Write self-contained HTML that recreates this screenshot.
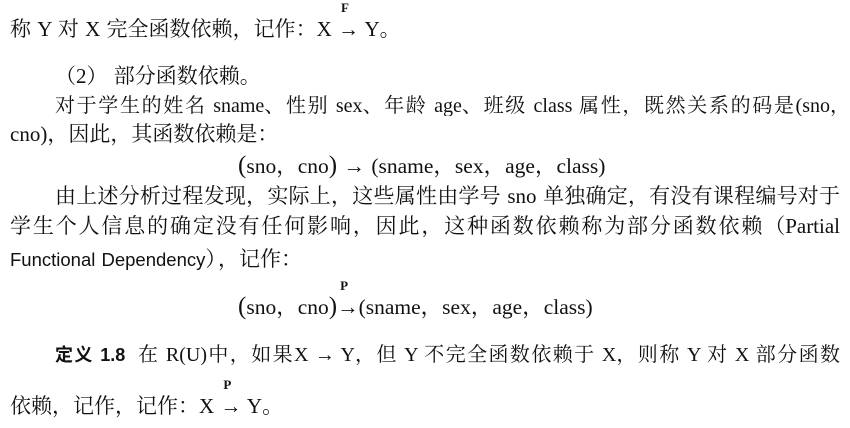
<!DOCTYPE html>
<html><head><meta charset="utf-8"><style>
body{margin:0;width:850px;height:428px;background:#fff;position:relative;overflow:hidden;font-family:"Liberation Serif","Noto Serif CJK SC","Noto Sans CJK SC",serif;font-size:21px;color:#111;word-spacing:1px}
.l{position:absolute;white-space:nowrap;line-height:24px;height:24px}
.j{text-align:justify;text-align-last:justify;white-space:normal;overflow:hidden}
.a{position:relative;display:inline-block}
.a sup{position:absolute;left:3px;top:-16px;font-size:13px;line-height:13px;font-weight:bold}
.s{font-family:"Liberation Sans","Noto Sans CJK SC",sans-serif}
.p{display:inline-block;width:1em;text-align:left;font-family:"Noto Serif CJK SC","Noto Sans CJK SC",serif}
.pr{text-align:right}
.big{font-size:25px}
</style></head><body>
<div class="l" style="left:10px;top:16px">称 Y 对 X 完全函数依赖<span class="p">，</span>记作<span class="p">：</span>X <span class="a">→<sup>F</sup></span> Y<span class="p">。</span></div>
<div class="l" style="left:55px;top:63px"><span class="p pr">（</span>2<span class="p">）</span> 部分函数依赖<span class="p">。</span></div>
<div class="l j" style="left:55px;top:92px;width:785px;font-size:20px;word-spacing:0">对于学生的姓名 sname<span class="p">、</span>性别 sex<span class="p">、</span>年龄 age<span class="p">、</span>班级 class 属性<span class="p">，</span>既然关系的码是(sno<span class="p" style="width:0.5em">，</span></div>
<div class="l" style="left:10px;top:121px">cno)<span class="p">，</span>因此<span class="p">，</span>其函数依赖是<span class="p">：</span></div>
<div class="l" style="left:238px;top:153px;font-size:21.5px"><span class="big">(</span>sno<span class="p">，</span>cno<span class="big">)</span> → (sname<span class="p">，</span>sex<span class="p">，</span>age<span class="p">，</span>class)</div>
<div class="l j" style="left:55px;top:183px;width:785px">由上述分析过程发现<span class="p">，</span>实际上<span class="p">，</span>这些属性由学号 sno 单独确定<span class="p">，</span>有没有课程编号对于</div>
<div class="l j" style="left:10px;top:213px;width:830px">学生个人信息的确定没有任何影响<span class="p">，</span>因此<span class="p">，</span>这种函数依赖称为部分函数依赖<span class="p pr">（</span>Partial</div>
<div class="l" style="left:10px;top:246px"><span class="s" style="font-size:18.5px">Functional Dependency</span><span class="p" style="width:0.6em">）</span><span class="p">，</span>记作<span class="p">：</span></div>
<div class="l" style="left:238px;top:294px;font-size:21.5px"><span class="big">(</span>sno<span class="p">，</span>cno<span class="big">)</span><span class="a">→<sup>P</sup></span>(sname<span class="p">，</span>sex<span class="p">，</span>age<span class="p">，</span>class)</div>
<div class="l j" style="left:55px;top:341px;width:785px;font-size:20px;word-spacing:0"><b class="s" style="font-size:18px">定义 1.8</b>&nbsp;&nbsp;在 R(U)中<span class="p">，</span>如果X → Y<span class="p">，</span>但 Y 不完全函数依赖于 X<span class="p">，</span>则称 Y 对 X 部分函数</div>
<div class="l" style="left:10px;top:393px">依赖<span class="p">，</span>记作<span class="p">，</span>记作<span class="p">：</span>X <span class="a">→<sup>P</sup></span> Y<span class="p">。</span></div>
</body></html>
